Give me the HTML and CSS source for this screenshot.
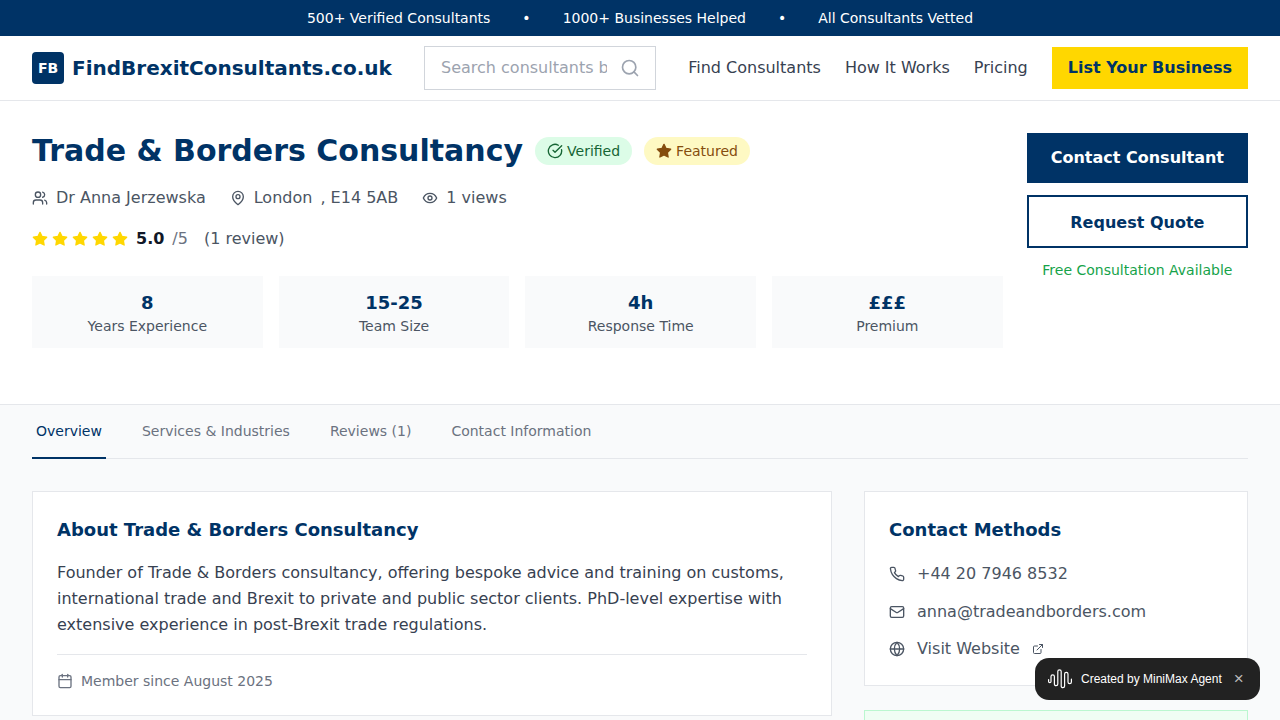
FILE: index.html
```html
<!DOCTYPE html>
<html lang="en">

<head>
    <meta charset="UTF-8">
    <meta name="viewport" content="width=device-width, initial-scale=1.0">
    <title>Trade &amp; Borders Consultancy - FindBrexitConsultants.co.uk</title>
    <link rel="stylesheet" href="styles.css">
</head>

<body>
    <div class="topBar">
        <span>500+ Verified Consultants</span>
        <span>•</span>
        <span>1000+ Businesses Helped</span>
        <span>•</span>
        <span>All Consultants Vetted</span>
    </div>

    <header class="header">
        <a class="logo" href="#">
            <span class="logoBox">FB</span>
            <span class="logoText">FindBrexitConsultants.co.uk</span>
        </a>
        <div class="search">
            <input class="searchInput" type="text" placeholder="Search consultants by name">
            <svg class="searchIcon" viewBox="0 0 24 24" width="20" height="20"><circle cx="11" cy="11" r="8"/><path d="m21 21-4.3-4.3"/></svg>
        </div>
        <nav class="nav">
            <a href="#">Find Consultants</a>
            <a href="#">How It Works</a>
            <a href="#">Pricing</a>
            <a class="navCta" href="#">List Your Business</a>
        </nav>
    </header>

    <section class="hero">
        <div class="heroMain">
            <div class="titleRow">
                <h1>Trade &amp; Borders Consultancy</h1>
                <span class="badge verified">
                    <svg class="icon" viewBox="0 0 24 24" width="16" height="16"><path d="M21.801 10A10 10 0 1 1 17 3.335"/><path d="m9 11 3 3L22 4"/></svg>
                    Verified
                </span>
                <span class="badge featured">
                    <svg class="icon filled" viewBox="0 0 24 24" width="16" height="16"><path d="M12 2l3.09 6.26L22 9.27l-5 4.87 1.18 6.88L12 17.77l-6.18 3.25L7 14.14 2 9.27l6.91-1.01z"/></svg>
                    Featured
                </span>
            </div>
            <div class="metaRow">
                <span class="metaItem">
                    <svg class="icon" viewBox="0 0 24 24" width="16" height="16"><path d="M16 21v-2a4 4 0 0 0-4-4H6a4 4 0 0 0-4 4v2"/><circle cx="9" cy="7" r="4"/><path d="M22 21v-2a4 4 0 0 0-3-3.87"/><path d="M16 3.13a4 4 0 0 1 0 7.75"/></svg>
                    Dr Anna Jerzewska
                </span>
                <span class="metaItem">
                    <svg class="icon" viewBox="0 0 24 24" width="16" height="16"><path d="M20 10c0 6-8 12-8 12s-8-6-8-12a8 8 0 0 1 16 0Z"/><circle cx="12" cy="10" r="3"/></svg>
                    <span><span class="town">London</span> , E14 5AB</span>
                </span>
                <span class="metaItem">
                    <svg class="icon" viewBox="0 0 24 24" width="16" height="16"><path d="M2 12s3-7 10-7 10 7 10 7-3 7-10 7-10-7-10-7Z"/><circle cx="12" cy="12" r="3"/></svg>
                    1 views
                </span>
            </div>
            <div class="ratingRow">
                <span class="stars">
                    <svg viewBox="0 0 24 24" width="16" height="16"><path d="M12 2l3.09 6.26L22 9.27l-5 4.87 1.18 6.88L12 17.77l-6.18 3.25L7 14.14 2 9.27l6.91-1.01z"/></svg>
                    <svg viewBox="0 0 24 24" width="16" height="16"><path d="M12 2l3.09 6.26L22 9.27l-5 4.87 1.18 6.88L12 17.77l-6.18 3.25L7 14.14 2 9.27l6.91-1.01z"/></svg>
                    <svg viewBox="0 0 24 24" width="16" height="16"><path d="M12 2l3.09 6.26L22 9.27l-5 4.87 1.18 6.88L12 17.77l-6.18 3.25L7 14.14 2 9.27l6.91-1.01z"/></svg>
                    <svg viewBox="0 0 24 24" width="16" height="16"><path d="M12 2l3.09 6.26L22 9.27l-5 4.87 1.18 6.88L12 17.77l-6.18 3.25L7 14.14 2 9.27l6.91-1.01z"/></svg>
                    <svg viewBox="0 0 24 24" width="16" height="16"><path d="M12 2l3.09 6.26L22 9.27l-5 4.87 1.18 6.88L12 17.77l-6.18 3.25L7 14.14 2 9.27l6.91-1.01z"/></svg>
                </span>
                <strong class="score">5.0</strong>
                <span class="outOf">/5</span>
                <span class="reviewCount">(1 review)</span>
            </div>
            <div class="stats">
                <div class="stat"><strong>8</strong><span>Years Experience</span></div>
                <div class="stat"><strong>15-25</strong><span>Team Size</span></div>
                <div class="stat"><strong>4h</strong><span>Response Time</span></div>
                <div class="stat"><strong>£££</strong><span>Premium</span></div>
            </div>
        </div>
        <aside class="heroSide">
            <a class="btn btnPrimary" href="#">Contact Consultant</a>
            <a class="btn btnOutline" href="#">Request Quote</a>
            <p class="freeNote">Free Consultation Available</p>
        </aside>
    </section>

    <main class="content">
        <ul class="tabs">
            <li class="active">Overview</li>
            <li>Services &amp; Industries</li>
            <li>Reviews (1)</li>
            <li>Contact Information</li>
        </ul>
        <div class="columns">
            <div class="card">
                <h3>About Trade &amp; Borders Consultancy</h3>
                <p class="about">Founder of Trade &amp; Borders consultancy, offering bespoke advice and training on customs, international trade and Brexit to private and public sector clients. PhD-level expertise with extensive experience in post-Brexit trade regulations.</p>
                <div class="memberSince">
                    <svg class="icon" viewBox="0 0 24 24" width="16" height="16"><path d="M8 2v4"/><path d="M16 2v4"/><rect x="3" y="4" width="18" height="18" rx="2"/><path d="M3 10h18"/></svg>
                    Member since August 2025
                </div>
            </div>
            <div class="sideCol">
                <div class="card">
                    <h3>Contact Methods</h3>
                    <ul class="methods">
                        <li>
                            <svg class="icon" viewBox="0 0 24 24" width="16" height="16"><path d="M22 16.92v3a2 2 0 0 1-2.18 2 19.79 19.79 0 0 1-8.63-3.07 19.5 19.5 0 0 1-6-6 19.79 19.79 0 0 1-3.07-8.67A2 2 0 0 1 4.11 2h3a2 2 0 0 1 2 1.72 12.84 12.84 0 0 0 .7 2.81 2 2 0 0 1-.45 2.11L8.09 9.91a16 16 0 0 0 6 6l1.27-1.27a2 2 0 0 1 2.11-.45 12.84 12.84 0 0 0 2.81.7A2 2 0 0 1 22 16.92z"/></svg>
                            +44 20 7946 8532
                        </li>
                        <li>
                            <svg class="icon" viewBox="0 0 24 24" width="16" height="16"><rect x="2" y="4" width="20" height="16" rx="2"/><path d="m22 7-8.97 5.7a1.94 1.94 0 0 1-2.06 0L2 7"/></svg>
                            anna@tradeandborders.com
                        </li>
                        <li>
                            <svg class="icon" viewBox="0 0 24 24" width="16" height="16"><circle cx="12" cy="12" r="10"/><path d="M12 2a14.5 14.5 0 0 0 0 20 14.5 14.5 0 0 0 0-20"/><path d="M2 12h20"/></svg>
                            Visit Website
                            <svg class="icon extLink" viewBox="0 0 24 24" width="12" height="12"><path d="M15 3h6v6"/><path d="M10 14 21 3"/><path d="M18 13v6a2 2 0 0 1-2 2H5a2 2 0 0 1-2-2V8a2 2 0 0 1 2-2h6"/></svg>
                        </li>
                    </ul>
                </div>
                <div class="card greenCard"></div>
            </div>
        </div>
    </main>

    <div class="agentToast">
        <svg class="agentLogo" viewBox="0 0 24 20" width="24" height="20"><path d="M.6 10.500v2a1.200 1.200 0 0 0 2.400 0V7.500a1.700 1.700 0 0 1 3.400 0V15a1.700 1.700 0 0 0 3.400 0V2.500a1.700 1.700 0 0 1 3.400 0V17a1.700 1.700 0 0 0 3.400 0V5a1.700 1.700 0 0 1 3.400 0v8a1.700 1.700 0 0 0 3.400 0v-3"/></svg>
        <span>Created by MiniMax Agent</span>
        <span class="toastClose">×</span>
    </div>
</body>

</html>
```

FILE: styles.css
```css
* {
    padding: 0;
    margin: 0;
    box-sizing: border-box;
    list-style: none;
}

html,
body {
    height: 720px;
    overflow: hidden;
}

body {
    position: relative;
    font-family: "DejaVu Sans", sans-serif;
    font-size: 16px;
    line-height: 24px;
    color: #374151;
    background-color: #f9fafb;
}

a {
    color: inherit;
    text-decoration: none;
}

.icon {
    flex: none;
    fill: none;
    stroke: currentColor;
    stroke-width: 2;
    stroke-linecap: round;
    stroke-linejoin: round;
}

.icon.filled {
    fill: currentColor;
}

/* top strip */
.topBar {
    display: flex;
    justify-content: center;
    gap: 32px;
    height: 36px;
    padding: 8px 0;
    font-size: 14px;
    line-height: 20px;
    color: #fff;
    background-color: #003366;
}

/* header */
.header {
    display: flex;
    align-items: center;
    justify-content: space-between;
    height: 65px;
    padding: 0 32px;
    background-color: #fff;
    border-bottom: 1px solid #e5e7eb;
}

.logo {
    display: flex;
    align-items: center;
    gap: 8px;
}

.logoBox {
    display: flex;
    align-items: center;
    justify-content: center;
    width: 32px;
    height: 32px;
    border-radius: 4px;
    font-size: 14px;
    font-weight: bold;
    color: #fff;
    background-color: #003366;
}

.logoText {
    font-size: 20px;
    line-height: 28px;
    font-weight: bold;
    color: #003366;
}

.search {
    position: relative;
    width: 232px;
    height: 44px;
}

.searchInput {
    width: 100%;
    height: 100%;
    padding: 7px 48px 9px 16px;
    font-family: inherit;
    font-size: 16px;
    color: #374151;
    background-color: #fff;
    border: 1px solid #d1d5db;
    outline: none;
}

.searchInput::placeholder {
    color: #9ca3af;
}

.searchIcon {
    position: absolute;
    right: 16px;
    top: 12px;
    fill: none;
    stroke: #9ca3af;
    stroke-width: 2;
    stroke-linecap: round;
    stroke-linejoin: round;
}

.nav {
    display: flex;
    align-items: center;
    gap: 24px;
}

.navCta {
    padding: 9px 16px;
    font-weight: bold;
    color: #003366;
    background-color: #ffd700;
}

/* consultant summary */
.hero {
    display: flex;
    gap: 24px;
    height: 304px;
    padding: 32px 32px 0;
    background-color: #fff;
    border-bottom: 1px solid #e5e7eb;
}

.heroMain {
    flex: 1;
}

.titleRow {
    display: flex;
    align-items: center;
    gap: 12px;
    margin-bottom: 17px;
    height: 36px;
}

.titleRow h1 {
    font-size: 30px;
    line-height: 36px;
    color: #003366;
}

.badge {
    display: flex;
    align-items: center;
    gap: 4px;
    height: 28px;
    padding: 0 12px;
    border-radius: 14px;
    font-size: 14px;
    line-height: 20px;
}

.verified {
    color: #166534;
    background-color: #dcfce7;
}

.featured {
    color: #854d0e;
    background-color: #fef9c3;
}

.metaRow {
    display: flex;
    gap: 24px;
    margin-bottom: 16px;
    color: #4b5563;
}

.metaItem {
    display: flex;
    align-items: center;
    gap: 8px;
}

.town {
    margin-right: 3px;
}

.ratingRow {
    display: flex;
    align-items: center;
    margin-bottom: 24px;
    height: 26px;
    line-height: 26px;
    color: #4b5563;
}

.stars {
    display: flex;
    gap: 4px;
    margin-right: 8px;
}

.stars svg {
    fill: #ffd700;
    stroke: #ffd700;
    stroke-width: 2;
    stroke-linejoin: round;
}

.score {
    color: #111827;
    margin-right: 8px;
}

.outOf {
    color: #6b7280;
    margin-right: 16px;
}

.stats {
    display: grid;
    grid-template-columns: repeat(4, 1fr);
    gap: 16px;
}

.stat {
    display: flex;
    flex-direction: column;
    align-items: center;
    height: 72px;
    padding: 12px;
    background-color: #f9fafb;
}

.stat strong {
    padding-top: 2px;
    font-size: 18px;
    line-height: 26px;
    color: #003366;
}

.stat span {
    font-size: 14px;
    line-height: 20px;
    color: #4b5563;
}

.heroSide {
    display: flex;
    flex-direction: column;
    width: 221.3px;
    text-align: center;
}

.btn {
    display: block;
    font-weight: bold;
}

.btnPrimary {
    padding: 13px 0;
    height: 50px;
    color: #fff;
    background-color: #003366;
    margin-bottom: 12px;
}

.btnOutline {
    padding: 14px 0;
    height: 53px;
    color: #003366;
    background-color: #fff;
    border: 2px solid #003366;
    margin-bottom: 12px;
}

.freeNote {
    font-size: 14px;
    line-height: 20px;
    color: #16a34a;
}

/* tabs and cards */
.content {
    padding: 0 32px;
}

.tabs {
    display: flex;
    gap: 32px;
    height: 54px;
    font-size: 14px;
    color: #6b7280;
    border-bottom: 1px solid #e5e7eb;
}

.tabs li {
    height: 54px;
    padding: 14px 4px 0;
    line-height: 24px;
}

.tabs .active {
    color: #003366;
    border-bottom: 2px solid #003366;
}

.columns {
    display: grid;
    grid-template-columns: 800px 384px;
    gap: 32px;
    margin-top: 32px;
    align-items: start;
}

.sideCol {
    display: flex;
    flex-direction: column;
    gap: 24px;
}

.card {
    padding: 24px;
    background-color: #fff;
    border: 1px solid #e5e7eb;
}

.card h3 {
    font-size: 18px;
    line-height: 28px;
    color: #003366;
    margin-bottom: 16px;
}

.sideCol .card h3 {
    margin-bottom: 18px;
}

.about {
    line-height: 26px;
}

.memberSince {
    display: flex;
    align-items: center;
    gap: 8px;
    margin-top: 16px;
    padding-top: 16px;
    font-size: 14px;
    line-height: 20px;
    color: #6b7280;
    border-top: 1px solid #e5e7eb;
}

.methods {
    display: flex;
    flex-direction: column;
    gap: 13.5px;
    color: #4b5563;
}

.methods li {
    display: flex;
    align-items: center;
    gap: 12px;
}

.greenCard {
    height: 200px;
    background-color: #f0fdf4;
    border-color: #bbf7d0;
}

/* floating agent badge */
.agentToast {
    position: absolute;
    left: 1035px;
    top: 658px;
    display: flex;
    align-items: center;
    width: 225px;
    height: 42px;
    padding-left: 13px;
    border-radius: 14px;
    font-family: "Liberation Sans", Arial, sans-serif;
    font-size: 12px;
    line-height: 16px;
    color: #fff;
    background-color: #222;
}

.agentLogo {
    margin-right: 9px;
    fill: none;
    stroke: #fff;
    stroke-width: 1.200;
    stroke-linecap: round;
    stroke-linejoin: round;
}

.toastClose {
    margin-left: 12px;
    font-size: 17px;
    color: #bbb;
}
```
